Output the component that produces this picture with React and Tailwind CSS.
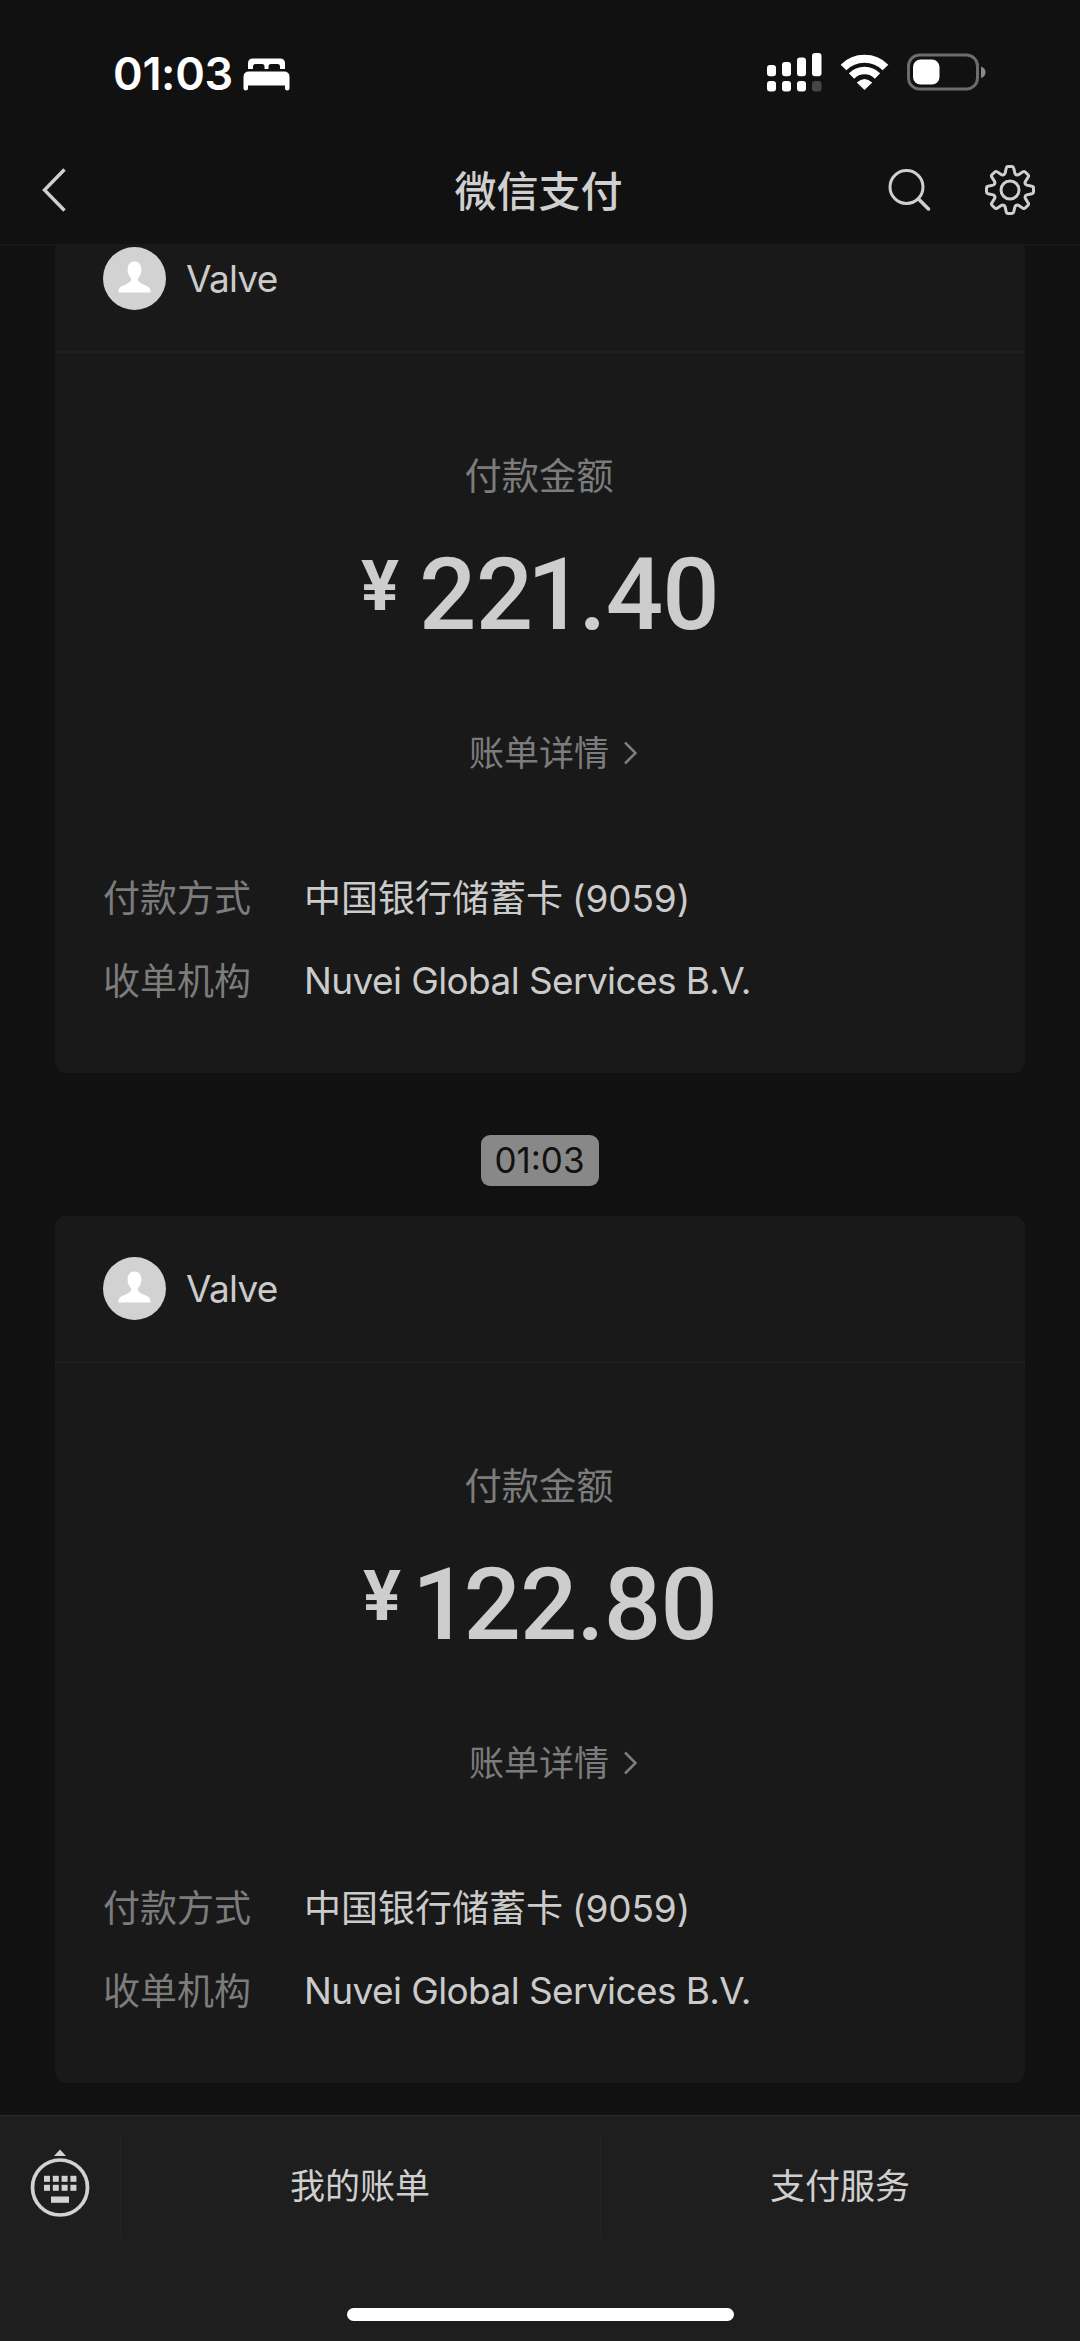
const bills = [
  { id: 1, merchant: 'Valve', amount: '221.40' },
  { id: 2, merchant: 'Valve', amount: '122.80' },
]

const details = [
  { label: '付款方式', value: '中国银行储蓄卡', suffix: '(9059)' },
  { label: '收单机构', value: 'Nuvei Global Services B.V.' },
]

// Outline of an 8-tooth gear around 0,0
const gearPath = () => {
  const rotate = (x, y, i) => {
    const a = (i * Math.PI) / 4
    const rx = x * Math.cos(a) - y * Math.sin(a)
    const ry = x * Math.sin(a) + y * Math.cos(a)
    return `${rx.toFixed(2)} ${ry.toFixed(2)}`
  }
  let d = ''
  for (let i = 0; i < 8; i++) {
    d += `${i === 0 ? 'M' : 'L'}${rotate(-4.9, -16.8, i)}`
    d += `L${rotate(-3.7, -22, i)}Q${rotate(-3.4, -23.5, i)} ${rotate(-2, -23.5, i)}`
    d += `L${rotate(2, -23.5, i)}Q${rotate(3.4, -23.5, i)} ${rotate(3.7, -22, i)}`
    d += `L${rotate(4.9, -16.8, i)}Q${rotate(5.6, -14.6, i)} ${rotate(8.06, -15.2, i)}`
  }
  return d + 'Z'
}

const StatusBar = () => (
  <div className="flex h-[146px] items-start justify-between pl-[113px] pr-[94px] pt-[53px] text-white">
    <div className="flex items-center">
      <span className="w-[130px] whitespace-nowrap text-[45px] font-semibold leading-[42px] tracking-[-0.3px]">01:03</span>
      <svg width="47" height="33" viewBox="0 0 47 33" fill="currentColor">
        <path d="M5 11V5.500Q5 0.500 10 0.500H37Q42 0.500 42 5.500V11H37V8.500Q37 6 34.500 6H28Q25.500 6 25.500 8.500V11H21.500V8.500Q21.500 6 19 6H12.500Q10 6 10 8.500V11Z" />
        <path d="M0.500 19Q0.500 13.500 6 13.500H41Q46.500 13.500 46.500 19V30.500Q46.500 32.500 44.200 32.500Q42 32.500 42 30.500V27.500H5V30.500Q5 32.500 2.800 32.500Q0.500 32.500 0.500 30.500Z" />
      </svg>
    </div>
    <div className="flex items-start">
      <svg width="55" height="39" viewBox="0 0 55 39" fill="currentColor">
        <rect x="0" y="12" width="9" height="11.300" rx="3" />
        <rect x="15" y="9" width="9" height="14.300" rx="3" />
        <rect x="30" y="4.500" width="9" height="18.800" rx="3" />
        <rect x="45" y="0" width="9.500" height="23.300" rx="3" />
        <rect x="0" y="28" width="9" height="10.500" rx="3" />
        <rect x="15" y="28" width="9" height="10.500" rx="3" />
        <rect x="30" y="28" width="9" height="10.500" rx="3" />
        <rect x="45" y="28" width="9.500" height="10.500" rx="3" fill="#464646" />
      </svg>
      <svg className="ml-[18px]" width="49" height="38" viewBox="0 0 49 38">
        <path d="M3.500 14.500A29.700 29.700 0 0 1 45.500 14.500" fill="none" stroke="currentColor" strokeWidth="8" />
        <path d="M11.500 23A18.300 18.300 0 0 1 37.500 23" fill="none" stroke="currentColor" strokeWidth="7.500" />
        <path d="M24.500 37L16.800 29.500Q24.500 22.500 32.200 29.500Z" fill="currentColor" />
      </svg>
      <svg className="ml-[18px]" width="79" height="39" viewBox="0 0 79 39">
        <rect x="1.500" y="2" width="69" height="34" rx="11" fill="none" stroke="#6c6c6c" strokeWidth="3" />
        <path d="M74 13.500Q78.500 15 78.500 19.200Q78.500 23.500 74 25Z" fill="#8a8a8a" />
        <rect x="6" y="6.500" width="26.500" height="25" rx="7.500" fill="currentColor" />
      </svg>
    </div>
  </div>
)

const NavBar = () => (
  <div className="grid h-[100px] grid-cols-3 items-center border-b-2 border-[#181818] pb-[10px] text-[#cfcfcf]">
    <svg className="ml-[41px]" width="26" height="46" viewBox="0 0 26 46" fill="none" stroke="currentColor" strokeWidth="3.400">
      <path d="M23.500 2.500L3.500 23L23.500 43.500" />
    </svg>
    <h1 className="pr-[3px] pt-[3px] text-center text-[42px] font-medium leading-[60px]">微信支付</h1>
    <div className="flex items-center justify-end pr-[44px]">
      <svg className="mr-[52px]" width="44" height="44" viewBox="0 0 44 44" fill="none" stroke="currentColor" strokeWidth="3">
        <circle cx="18.500" cy="19" r="16.500" />
        <path d="M30.500 31L40.500 41" strokeWidth="3.500" strokeLinecap="round" />
      </svg>
      <svg width="52" height="52" viewBox="-26 -26 52 52" fill="none" stroke="currentColor" strokeWidth="3" strokeLinejoin="round">
        <path d={gearPath()} />
        <circle r="9" />
      </svg>
    </div>
  </div>
)

// The "1" is set tighter than the other digits
const Amount = ({ value }) => {
  const [before, after] = value.split('1')
  return (
    <div className="mt-[43px] flex h-[100px] items-start whitespace-nowrap font-['Roboto'] font-medium leading-[100px] text-[#cdcdcd]">
      <span className={`text-[71px] font-bold leading-[82px] ${before ? 'mr-[20px]' : 'mr-[11px]'}`}>¥</span>
      <span className="text-[101px] tracking-[-0.8px]">
        {before.slice(0, -1)}
        <span className="tracking-[-6px]">{before.slice(-1)}</span>
        <span className="tracking-[-6px]">1</span>
        {after}
      </span>
    </div>
  )
}

const BillCard = ({ bill }) => (
  <section className="h-[867px] w-[970px] shrink-0 overflow-hidden rounded-[11px] bg-[#191919]">
    <div className="flex h-[147px] items-center border-b-2 border-[#1e1e1e] pl-[48px]">
      <svg width="63" height="63" viewBox="0 0 63 63">
        <circle cx="31.500" cy="31.500" r="31.500" fill="#d2d2d2" />
        <path
          d="M31.500 14.500C27 14.500 24.600 18 24.600 22.500C24.600 26.500 26 29.200 28 31C28.600 33.500 27.500 35 24.500 36.500C19 39 15.500 40 15.500 44V45.500H47.500V44C47.500 40 44 39 38.500 36.500C35.500 35 34.400 33.500 35 31C37 29.200 38.400 26.500 38.400 22.500C38.400 18 36 14.500 31.500 14.500Z"
          fill="#fff"
        />
      </svg>
      <span className="ml-[20px] text-[37px] leading-[50px] tracking-[-0.7px] text-[#cbcbcb]">{bill.merchant}</span>
    </div>

    <div className="flex flex-col items-center">
      <p className="mr-[2px] mt-[99px] text-[37.300px] leading-[50px] text-[#7c7c7c]">付款金额</p>
      <Amount value={bill.amount} />
      <a className="ml-[28px] mt-[88px] flex h-[40px] items-center text-[35px] leading-[40px] text-[#7c7c7c]">
        账单详情
        <svg className="ml-[14px]" width="16" height="24" viewBox="0 0 16 24" fill="none" stroke="currentColor" strokeWidth="2.500">
          <path d="M2 1.500L12.500 12L2 22.500" />
        </svg>
      </a>
    </div>

    <dl className="mt-[83px] px-[48px] text-[37px]">
      {details.map(item => (
        <div key={item.label} className="flex h-[83px] items-center">
          <dt className="w-[201px] pt-[2px] text-[#7c7c7c]">{item.label}</dt>
          {item.suffix ? (
            <dd className="flex pt-[2px] text-[#cbcbcb]">
              <span>{item.value}</span>
              <span className="ml-[9px] tracking-[-0.1px]">{item.suffix}</span>
            </dd>
          ) : (
            <dd className="tracking-[-0.6px] text-[#cbcbcb]">{item.value}</dd>
          )}
        </div>
      ))}
    </dl>
  </section>
)

// 4x2 key grid with a space bar, inside a ring
const KeyboardIcon = () => (
  <svg className="mb-[6px]" width="60" height="70" viewBox="0 0 60 70" fill="#d2d2d2">
    <path d="M30 1.500L36 8H24Z" />
    <circle cx="30" cy="39.500" r="27.500" fill="none" stroke="#d2d2d2" strokeWidth="3.700" />
    {[0, 1, 2, 3].map(col => (
      <g key={col}>
        <rect x={14 + col * 8.8} y="27.800" width="6" height="6" />
        <rect x={14 + col * 8.8} y="36.800" width="6" height="6" />
      </g>
    ))}
    <rect x="21" y="48.500" width="18" height="6.300" />
  </svg>
)

const BottomMenu = () => (
  <footer className="flex h-[226px] shrink-0 flex-col border-t border-[#2b2b2b] bg-[#1e1e1e]">
    <div className="mt-[20px] flex h-[100px] text-[35px] text-[#cfcfcf]">
      <div className="flex w-[121px] items-center justify-center border-r border-[#252525]">
        <KeyboardIcon />
      </div>
      <div className="flex flex-1 items-center justify-center border-r border-[#252525] pr-[1px]">我的账单</div>
      <div className="flex flex-1 items-center justify-center pr-[1px]">支付服务</div>
    </div>
    <div className="mx-auto mt-[72px] h-[13px] w-[387px] rounded-full bg-white" />
  </footer>
)

const App = () => (
  <div className="flex h-[2341px] w-[1080px] flex-col overflow-hidden bg-[#111111] font-['Inter','Noto_Sans_CJK_SC',sans-serif]">
    <header className="h-[246px] shrink-0">
      <StatusBar />
      <NavBar />
    </header>

    {/* Chat is scrolled to its end, so the first card runs under the header */}
    <main className="flex min-h-0 flex-1 flex-col items-center justify-end overflow-hidden pb-[32px]">
      <BillCard bill={bills[0]} />
      <time className="mb-[30px] mr-[1px] mt-[62px] flex h-[51px] w-[118px] shrink-0 items-center justify-center rounded-[9px] bg-[#888888] text-[35px] text-[#111111]">
        01:03
      </time>
      <BillCard bill={bills[1]} />
    </main>

    <BottomMenu />
  </div>
)

export default App
